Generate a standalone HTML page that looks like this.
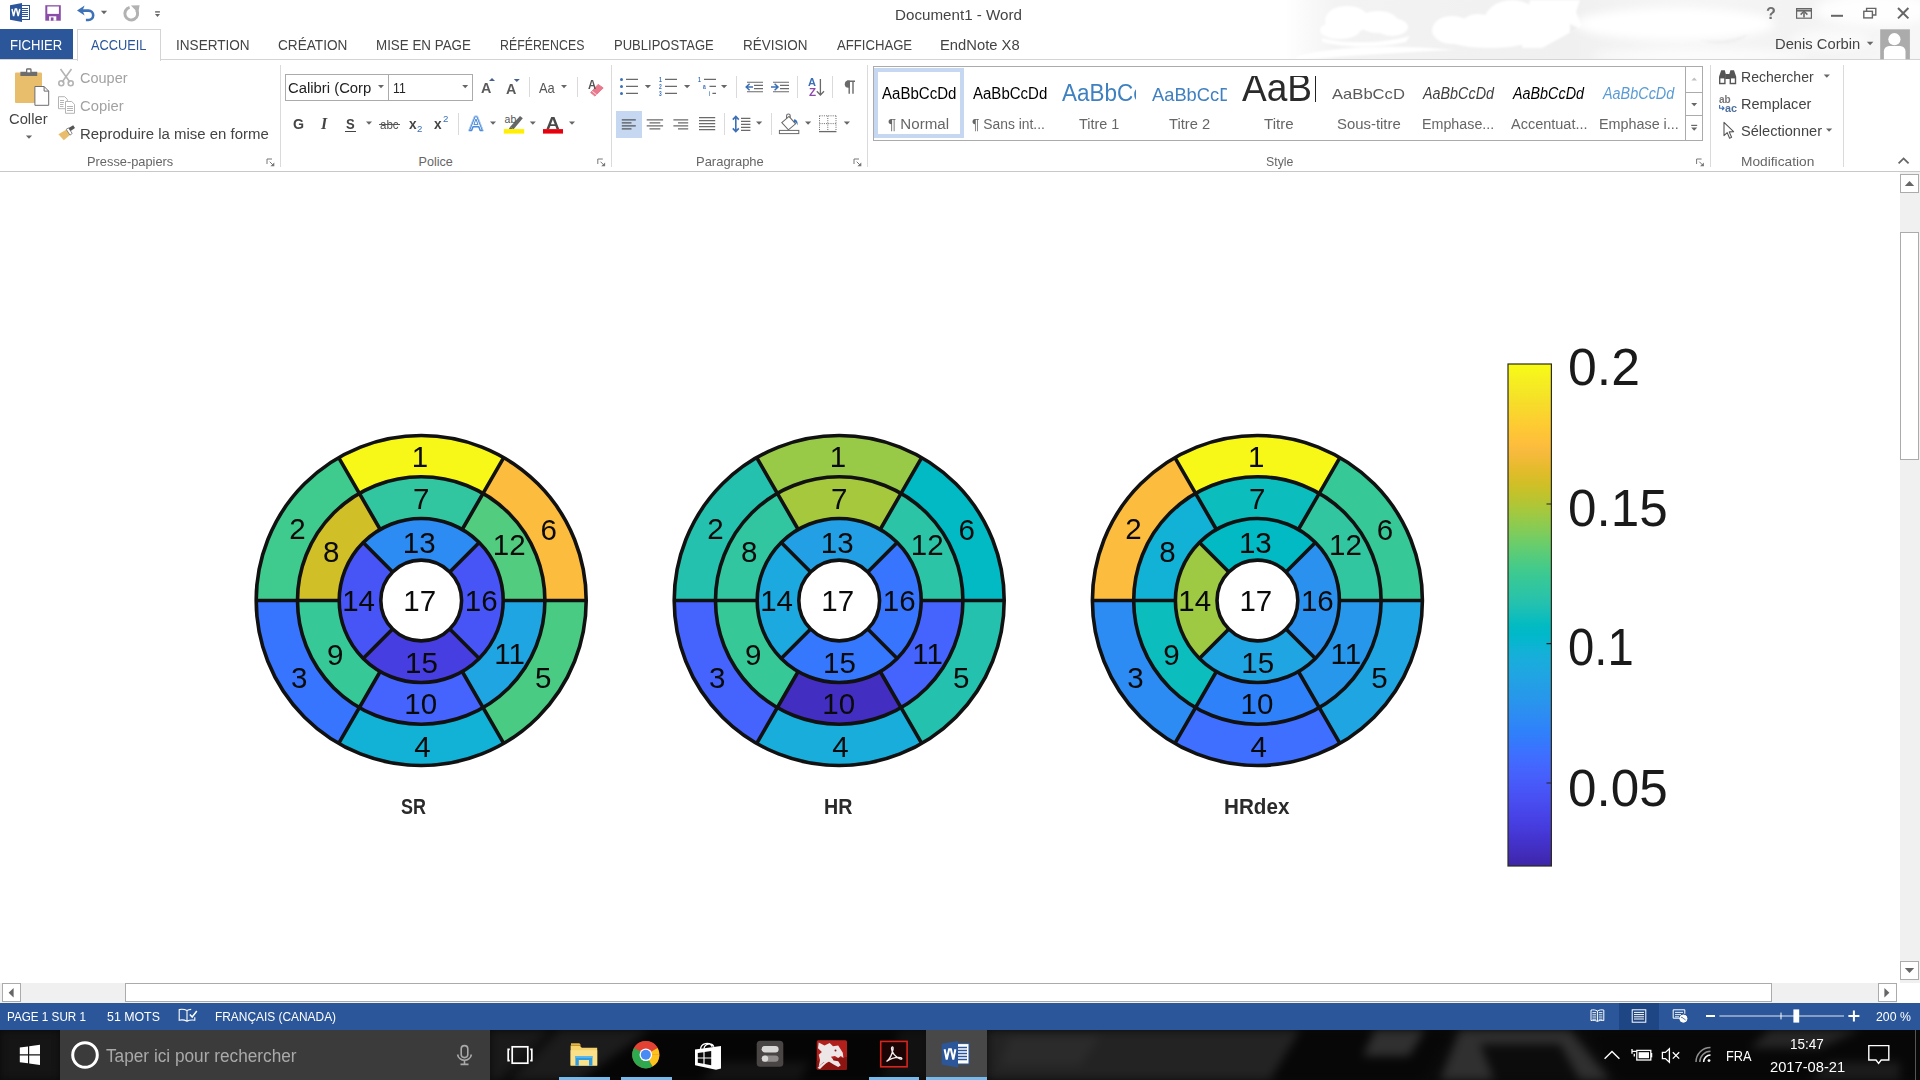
<!DOCTYPE html>
<html lang="fr"><head><meta charset="utf-8"><title>Document1 - Word</title>
<style>
html,body{margin:0;padding:0;}
body{width:1920px;height:1080px;overflow:hidden;background:#fff;position:relative;font-family:"Liberation Sans",sans-serif;}
.a{position:absolute;box-sizing:border-box;}
.t{position:absolute;white-space:nowrap;line-height:1.117;transform-origin:0 0;display:block;}
svg.ov{position:absolute;left:0;top:0;}
</style></head><body>
<svg class="ov" width="1920" height="1080" viewBox="0 0 1920 1080">
<defs><linearGradient id="cg" x1="0" y1="0" x2="1" y2="0"><stop offset="0" stop-color="#fff"/><stop offset=".08" stop-color="#f3f3f3"/><stop offset=".45" stop-color="#f0f0f0"/><stop offset=".62" stop-color="#f6f6f6"/><stop offset=".8" stop-color="#f3f3f3"/><stop offset="1" stop-color="#f7f7f7"/></linearGradient>
<filter id="cb" color-interpolation-filters="sRGB" x="-20%" y="-50%" width="140%" height="200%"><feGaussianBlur stdDeviation="1.2"/></filter>
<filter id="cb2" color-interpolation-filters="sRGB" x="-20%" y="-80%" width="140%" height="260%"><feGaussianBlur stdDeviation="5"/></filter>
<clipPath id="ccl"><rect x="1280" y="0" width="640" height="59"/></clipPath></defs>
<g clip-path="url(#ccl)"><rect x="1285" y="0" width="635" height="59" fill="url(#cg)"/>
<g filter="url(#cb)" fill="#fff">
<ellipse cx="1347" cy="20" rx="22" ry="14"/><ellipse cx="1378" cy="22" rx="20" ry="11"/><ellipse cx="1392" cy="27" rx="16" ry="9"/><ellipse cx="1340" cy="30" rx="20" ry="9"/>
<path d="M1322 38c20 6 60 6 88-2l-4 6c-26 6-60 6-84 0z"/>
<ellipse cx="1452" cy="30" rx="20" ry="14"/><ellipse cx="1478" cy="24" rx="16" ry="10"/><ellipse cx="1512" cy="22" rx="28" ry="22"/><ellipse cx="1490" cy="38" rx="44" ry="10"/>
<path d="M1530 0h50l-4 12l6 14l-40 22h-20z"/>

<path d="M1296 56c40-10 100-12 160-6c-50 2-110 6-160 10z"/>


</g>
<g filter="url(#cb2)" fill="#fff"><ellipse cx="1675" cy="24" rx="100" ry="16"/><ellipse cx="1700" cy="56" rx="110" ry="7" opacity=".7"/><ellipse cx="1875" cy="10" rx="60" ry="16" opacity=".85"/><ellipse cx="1830" cy="40" rx="40" ry="10" opacity=".6"/></g>
<g filter="url(#cb)" fill="#eeeeee"><path d="M1700 40c20 3 36 0 48-6c-8 10-30 12-48 6z"/><path d="M1570 24l8 4l-8 6z"/></g>
</g>
<rect x="0" y="1030" width="1920" height="50" fill="#0a0a0a"/><defs><filter id="tb" color-interpolation-filters="sRGB" x="-10%" y="-50%" width="120%" height="200%"><feGaussianBlur stdDeviation="5"/></filter>
<clipPath id="tbc"><rect x="0" y="1030" width="1920" height="50"/></clipPath></defs>
<g clip-path="url(#tbc)"><g filter="url(#tb)">
<rect x="0" y="1030" width="60" height="50" fill="#151515"/>
<path d="M490 1030h60l-50 50h-10z" fill="#1a1a1a"/>
<path d="M560 1030h90l-70 50h-70z" fill="#1c1c1c"/>
<path d="M650 1030h280v50h-350z" fill="#050505"/>
<path d="M720 1062h90l-10 18h-100z" fill="#141414"/>
<path d="M900 1030h30v50h-50z" fill="#111"/>
<rect x="987" y="1030" width="330" height="50" fill="#232323"/>
<path d="M1010 1036h90l-20 30h-80z" fill="#2b2b2b"/>
<path d="M1300 1030h150l-30 50h-150z" fill="#070707"/>
<path d="M1375 1030h50l-16 26h-46z" fill="#303030"/>
<path d="M1460 1030h110l40 50h-170z" fill="#303030"/>
<path d="M1480 1044h80l20 36h-86z" fill="#0c0c0c"/>
<path d="M1590 1030h330v50h-300z" fill="#070707"/>
<path d="M1770 1030h90l-40 18h-70z" fill="#262626"/>
<path d="M1830 1062h70v18h-90z" fill="#1c1c1c"/>
</g></g>
</svg>
<div class="a" style="left:0px;top:29px;width:73px;height:31px;background:#2b579a;"></div>
<div class="a" style="left:77px;top:29px;width:84px;height:32px;background:#fff;border:1px solid #d4d4d4;border-bottom:none;"></div>
<div class="a" style="left:0px;top:59px;width:78px;height:1px;background:#d4d4d4;"></div>
<div class="a" style="left:160px;top:59px;width:1760px;height:1px;background:#d4d4d4;"></div>
<div class="a" style="left:0px;top:171px;width:1920px;height:1px;background:#c8c8c8;"></div>
<div class="a" style="left:1900px;top:172px;width:20px;height:811px;background:#f0f0f0;"></div>
<div class="a" style="left:1900px;top:174px;width:19px;height:19px;background:#fff;border:1px solid #ababab;"></div>
<div class="a" style="left:1900px;top:232px;width:19px;height:228px;background:#fff;border:1px solid #ababab;"></div>
<div class="a" style="left:1900px;top:961px;width:19px;height:19px;background:#fff;border:1px solid #ababab;"></div>
<div class="a" style="left:280px;top:65px;width:1px;height:102px;background:#dadada;"></div>
<div class="a" style="left:285px;top:74px;width:104px;height:27px;background:#fff;border:1px solid #ababab;"></div>
<div class="a" style="left:388px;top:74px;width:85px;height:27px;background:#fff;border:1px solid #ababab;"></div>
<div class="a" style="left:529px;top:77px;width:1px;height:20px;background:#dadada;"></div>
<div class="a" style="left:577px;top:77px;width:1px;height:20px;background:#dadada;"></div>
<div class="a" style="left:344.5px;top:130.5px;width:11px;height:1.5px;background:#444;"></div>
<div class="a" style="left:379px;top:124px;width:20.5px;height:1.2px;background:#555;"></div>
<div class="a" style="left:458px;top:113px;width:1px;height:22px;background:#dadada;"></div>
<div class="a" style="left:611px;top:65px;width:1px;height:102px;background:#dadada;"></div>
<div class="a" style="left:736px;top:76px;width:1px;height:22px;background:#dadada;"></div>
<div class="a" style="left:797px;top:76px;width:1px;height:22px;background:#dadada;"></div>
<div class="a" style="left:832px;top:76px;width:1px;height:22px;background:#dadada;"></div>
<div class="a" style="left:867px;top:65px;width:1px;height:102px;background:#dadada;"></div>
<div class="a" style="left:616px;top:111px;width:26px;height:27px;background:#c5d7f1;"></div>
<div class="a" style="left:724px;top:113px;width:1px;height:22px;background:#dadada;"></div>
<div class="a" style="left:771px;top:113px;width:1px;height:22px;background:#dadada;"></div>
<div class="a" style="left:873px;top:66px;width:830px;height:75px;background:#fff;border:1px solid #ababab;"></div>
<div class="a" style="left:874px;top:68px;width:90px;height:70px;background:#fff;border:4.5px solid #c5d7f1;"></div>
<div class="a" style="left:1315px;top:76px;width:1.2px;height:26px;background:#222;"></div>
<div class="a" style="left:1685px;top:66px;width:18px;height:27px;background:#fff;border:1px solid #ababab;"></div>
<div class="a" style="left:1685px;top:92px;width:18px;height:24px;background:#fff;border:1px solid #ababab;"></div>
<div class="a" style="left:1685px;top:115px;width:18px;height:26px;background:#fff;border:1px solid #ababab;"></div>
<div class="a" style="left:1710px;top:65px;width:1px;height:102px;background:#dadada;"></div>
<div class="a" style="left:1843px;top:65px;width:1px;height:102px;background:#dadada;"></div>
<div class="a" style="left:0px;top:983px;width:1897px;height:20px;background:#f0f0f0;"></div>
<div class="a" style="left:1897px;top:983px;width:23px;height:20px;background:#fff;"></div>
<div class="a" style="left:2px;top:983px;width:19px;height:19px;background:#fff;border:1px solid #ababab;"></div>
<div class="a" style="left:125px;top:983px;width:1647px;height:19px;background:#fff;border:1px solid #ababab;"></div>
<div class="a" style="left:1878px;top:983px;width:19px;height:19px;background:#fff;border:1px solid #ababab;"></div>
<div class="a" style="left:0px;top:1003px;width:1920px;height:27px;background:#2b579a;"></div>
<div class="a" style="left:1619px;top:1003px;width:40px;height:27px;background:#1e4684;"></div>
<div class="a" style="left:60px;top:1030px;width:430px;height:50px;background:#3b3b3b;"></div>
<div class="a" style="left:559.3px;top:1077.4px;width:50.30000000000007px;height:2.6px;background:#76b9ed;"></div>
<div class="a" style="left:621px;top:1077.4px;width:50.700000000000045px;height:2.6px;background:#76b9ed;"></div>
<div class="a" style="left:869.3px;top:1077.4px;width:50.10000000000002px;height:2.6px;background:#76b9ed;"></div>
<div class="a" style="left:926px;top:1030px;width:60.6px;height:50px;background:#484848;"></div>
<div class="a" style="left:926px;top:1077.4px;width:60.6px;height:2.6px;background:#76b9ed;"></div>
<div class="a" style="left:1915px;top:1030px;width:1px;height:50px;background:#555;"></div>
<svg class="ov" width="1920" height="1080" viewBox="0 0 1920 1080">
<g>
<rect x="19" y="5.5" width="10.5" height="14" fill="#fff" stroke="#2b579a" stroke-width="1"/>
<g stroke="#2b579a" stroke-width="1"><path d="M21 8.5h7M21 10.5h7M21 12.5h7M21 14.5h7M21 16.5h7"/></g>
<path d="M10 5.2 L22 3 V22 L10 19.8 Z" fill="#2b579a"/>
<path d="M12 9 l1.6 7.2 l1.7-7.2 h1.2 l1.7 7.2 l1.6-7.2" fill="none" stroke="#fff" stroke-width="1.5" stroke-linejoin="miter"/>
</g>
<g><rect x="45.3" y="5.2" width="15.5" height="15.5" fill="#8a4ea8"/><rect x="47.3" y="6.5" width="11.6" height="7.4" fill="#fff"/><rect x="49.1" y="16.3" width="7.2" height="4.4" fill="#fff"/><rect x="50.8" y="17.4" width="2.7" height="3.3" fill="#8a4ea8"/></g>
<g fill="none" stroke="#3e72b8" stroke-width="2.6"><path d="M79.5 10.6 h9 a4.7 4.7 0 0 1 0 9.4 h-2.6"/></g><path d="M84.6 5.6 L77 10.6 L84.6 15.6 L82.6 10.6z" fill="#3e72b8"/>
<path d="M100.9 10.8h6.2l-3.1 3.4z" fill="#666"/>
<g fill="none" stroke="#b2b2b2" stroke-width="3"><path d="M129.6 7.4 A6.4 6.4 0 1 0 136.4 9.8"/></g><path d="M130.9 5.4 L139.6 5.2 L138.2 13 Z" fill="#b2b2b2"/>
<path d="M155.1 11.9h4.8" stroke="#666" stroke-width="1.4"/><path d="M155 13.9h5l-2.5 3z" fill="#666"/>
<g fill="none" stroke="#666" stroke-width="1.2"><rect x="1796.6" y="8.6" width="14.8" height="9.6"/><path d="M1796.6 10.6h14.8" stroke-width="2"/><path d="M1804 17.6v-5" stroke-width="1.6"/><path d="M1800.6 14.6l3.4-3.4l3.4 3.4" stroke-width="1.5"/></g>
<path d="M1831 15.8h12" stroke="#666" stroke-width="2"/>
<g fill="none" stroke="#666" stroke-width="1.4"><rect x="1863.8" y="11.3" width="8.6" height="6.6"/><path d="M1866.6 11v-2.6h9.2v6.6h-3" /></g>
<path d="M1898 8l10.4 10.4M1908.4 8L1898 18.4" stroke="#666" stroke-width="2"/>
<path d="M1866.8 41.8h6.6l-3.3 3.4z" fill="#666"/>
<g><rect x="1880.2" y="29.3" width="29.7" height="30" fill="#ababab"/><circle cx="1894.4" cy="39.2" r="6.1" fill="#fff"/><path d="M1883.9 59.3 v-8 a5.300 5.300 0 0 1 5.300-5.300 h11 a5.300 5.300 0 0 1 5.300 5.300 v8z" fill="#fff"/></g>
<path d="M1904.8 186h9.4l-4.7-5z" fill="#666"/>
<path d="M1904.8 968h9.4l-4.7 5z" fill="#666"/>
<g><rect x="15" y="72.4" width="27" height="30.6" rx="1" fill="#e8bd6c"/>
<path d="M20.4 76v-4.2h5.6v-2.2a1.4 1.4 0 0 1 1.4-1.4h2.8a1.4 1.4 0 0 1 1.4 1.4v2.2h5.6v4.2z" fill="#6d6d6d"/><rect x="27.3" y="69.7" width="3" height="2.6" fill="#fff"/>
<path d="M34.9 86.5h9.2l4.6 4.6v14.2h-13.8z" fill="#fff" stroke="#6d6d6d" stroke-width="1"/><path d="M44.1 86.5v4.6h4.6" fill="none" stroke="#6d6d6d" stroke-width="1"/></g>
<path d="M25.9 135.6h6.2l-3.1 3.2z" fill="#666"/>
<g fill="none" stroke="#b4b4b4" stroke-width="1.6"><path d="M60.5 69l9.5 13.2M71.5 69l-9.5 13.2"/><circle cx="61.3" cy="83.2" r="2.5"/><circle cx="70.7" cy="83.2" r="2.5"/></g>
<g fill="#fff" stroke="#b4b4b4" stroke-width="1"><path d="M58.5 96.7h6.2l2.6 2.6v9.4h-8.8z"/><path d="M65.5 101.5h6.2l2.8 2.8v9h-9z"/></g>
<g stroke="#b4b4b4" stroke-width="1"><path d="M60 100.5h4M60 102.5h4M60 104.5h3.5M60 106.5h3.5M67 106.5h6M67 108.5h6M67 110.5h6"/></g>
<g><path d="M58.4 134.2l8.2-4.6l3.4 5.4l-6.2 5.2z" fill="#e8bd6c"/><path d="M66.2 129.3l2.4-1.4l3.6 5.6l-2.2 1.6z" fill="#fff" stroke="#6d6d6d" stroke-width=".8"/><path d="M68.6 127.9l4.6-2.6l1.8 2.8l-4.4 3z" fill="#555"/></g>
<g fill="none" stroke="#777" stroke-width="1"><path d="M267 164v-5h5"/><path d="M269.7 161.7l4 4"/></g><path d="M274.3 162.4v3.9h-3.9z" fill="#777"/>
<path d="M378 85h6l-3.0 3.2z" fill="#666"/>
<path d="M462.2 85h6l-3.0 3.2z" fill="#666"/>
<path d="M489 80.9h6l-3-3z" fill="#46618e"/>
<path d="M513.8 78.900h6l-3 3.100z" fill="#46618e"/>
<path d="M561 85h6l-3.0 3.2z" fill="#666"/>
<path d="M598.1 84.400l5.100 3.500l-8.200 8.200l-4.300-3.500z" fill="#e8788c" stroke="#e8788c" stroke-width="1" stroke-linejoin="round"/><path d="M592.3 91.300l4.400 3.600" stroke="#fff" stroke-width=".8"/>
<path d="M366 121.5h6l-3.0 3.2z" fill="#666"/>
<g fill="#fff" stroke="#4a8ad8" stroke-width="1.5" stroke-linejoin="round"><path d="M469.2 130.6l5.6-14h2.3l5.6 14h-2.5l-1.4-3.8h-5.8l-1.4 3.8z"/></g><path d="M473.9 124.6h4.1l-2.05-5.6z" fill="#fff" stroke="#4a8ad8" stroke-width="1"/>
<path d="M468.4 131.2l6-15.2h3.1l6 15.2" fill="none" stroke="#bcd6f4" stroke-width=".9" opacity=".9"/>
<path d="M490 121.5h6l-3.0 3.2z" fill="#666"/>
<path d="M510.2 126.8l9.8-10.8l2.8 2.2l-9.2 11z" fill="#666"/><path d="M508.6 129.4l1.6-2.6l3.4 2.4z" fill="#666"/><rect x="503.8" y="129.1" width="20.4" height="4.5" fill="#ffef00"/>
<path d="M529.8 121.5h6l-3.0 3.2z" fill="#666"/>
<rect x="543" y="129.1" width="20" height="4.5" fill="#e8000c"/>
<path d="M569 121.5h6l-3.0 3.2z" fill="#666"/>
<g fill="none" stroke="#777" stroke-width="1"><path d="M597.8 164v-5h5"/><path d="M600.5 161.7l4 4"/></g><path d="M605.0999999999999 162.4v3.9h-3.9z" fill="#777"/>
<circle cx="621.5" cy="79.4" r="1.5" fill="#3b6fb6"/><circle cx="621.5" cy="86.4" r="1.5" fill="#3b6fb6"/><circle cx="621.5" cy="93.4" r="1.5" fill="#3b6fb6"/>
<path d="M626 79.4H638M626 86.4H638M626 93.4H638" stroke="#6a6a6a" stroke-width="1.1" fill="none"/>
<path d="M644.8 85h6.2l-3.1 3.2z" fill="#666"/>
<path d="M665 79.4H677M665 86.4H677M665 93.4H677" stroke="#6a6a6a" stroke-width="1.1" fill="none"/>
<path d="M684 85h6.2l-3.1 3.2z" fill="#666"/>
<path d="M704 79.4H716M709.5 86.4H716M712.4 93.4H716" stroke="#6a6a6a" stroke-width="1.1" fill="none"/>
<path d="M721 85h6.2l-3.1 3.2z" fill="#666"/>
<path d="M747 82.2H763M754 85.4H763M754 88.6H763M747 91.8H763" stroke="#6a6a6a" stroke-width="1.1" fill="none"/>
<path d="M753 87H746.4M749.6 83.8L746.2 87l3.4 3.2" stroke="#3b6fb6" stroke-width="1.5" fill="none"/>
<path d="M773 82.2H789M780 85.4H789M780 88.6H789M773 91.8H789" stroke="#6a6a6a" stroke-width="1.1" fill="none"/>
<path d="M771 87h6.8M774.6 83.8L778 87l-3.4 3.2" stroke="#3b6fb6" stroke-width="1.5" fill="none"/>
<path d="M820.4 79v15.6M816.8 91.2l3.6 3.8l3.6-3.8" stroke="#6a6a6a" stroke-width="1.3" fill="none"/>
<path d="M849.2 93.8V81.2M853 93.8V81.2M847 81.2h8" stroke="#6a6a6a" stroke-width="1.4" fill="none"/><path d="M849.8 80.6h-1.4a3.6 3.6 0 0 0 0 7.2h1.4z" fill="#6a6a6a"/>
<path d="M621.8 119.8H635.8M621.8 122.8H631.5M621.8 125.8H635.8M621.8 128.8H631.5" stroke="#555" stroke-width="1.2" fill="none"/>
<path d="M646.7 119.8H663.1M649.5 122.8H660.3M646.7 125.8H663.1M649.5 128.8H660.3" stroke="#6a6a6a" stroke-width="1.2" fill="none"/>
<path d="M673.4 119.8H688.2M678 122.8H688.2M673.4 125.8H688.2M678 128.8H688.2" stroke="#6a6a6a" stroke-width="1.2" fill="none"/>
<path d="M699 117.6H715.2M699 120.6H715.2M699 123.6H715.2M699 126.6H715.2M699 129.6H715.2" stroke="#6a6a6a" stroke-width="1.2" fill="none"/>
<path d="M735.8 116.6v14.6M732.8 119.6l3-3.2l3 3.2M732.8 128.4l3 3.2l3-3.2" stroke="#3b6fb6" stroke-width="1.6" fill="none"/>
<path d="M741 118.4H750.4M741 121.4H750.4M741 124.4H750.4M741 127.4H750.4M741 130.4H750.4" stroke="#6a6a6a" stroke-width="1.2" fill="none"/>
<path d="M756 121.5h6.2l-3.1 3.2z" fill="#666"/>
<g fill="none" stroke="#6a6a6a" stroke-width="1.1"><path d="M781.8 122.6l7.2-6.2l6.6 7.4l-7.2 6z" fill="#fff"/><path d="M786.6 118.8v-3a1.8 1.8 0 0 1 3.6 0v2"/></g><path d="M794.2 119.2c2.6.2 3.8 2.2 3.4 6.2c-.8-2.6-2-3.4-4.2-3.4z" fill="#3b6fb6"/><rect x="779.4" y="130.4" width="19.4" height="3.2" fill="#fff" stroke="#6a6a6a" stroke-width="1"/>
<path d="M805 121.5h6.2l-3.1 3.2z" fill="#666"/>
<g fill="none" stroke="#6a6a6a" stroke-width="1" stroke-dasharray="1 1.2"><path d="M819.5 115.8h16.5M819.5 115.8v15.6M836 115.8v15.6M827.8 115.8v15.6M819.5 123.6h16.5"/></g><path d="M819 131.6h17.4" stroke="#6a6a6a" stroke-width="1.3"/>
<path d="M843.8 121.5h6.2l-3.1 3.2z" fill="#666"/>
<g fill="none" stroke="#777" stroke-width="1"><path d="M854 164v-5h5"/><path d="M856.7 161.7l4 4"/></g><path d="M861.3 162.4v3.9h-3.9z" fill="#777"/>
<path d="M1691.4 80.4h5.6l-2.8-3z" fill="#c0c0c0"/><path d="M1691.2 103h6l-3 3.2z" fill="#666"/><path d="M1691.2 125.4h6" stroke="#666" stroke-width="1.2"/><path d="M1691.2 127.6h6l-3 3.2z" fill="#666"/>
<g fill="none" stroke="#777" stroke-width="1"><path d="M1696.6 164v-5h5"/><path d="M1699.3 161.7l4 4"/></g><path d="M1703.8999999999999 162.4v3.9h-3.9z" fill="#777"/>
<g fill="#555"><path d="M1719 84.2v-7.4l2.2-6.6h3.6l.8 3v11z"/><path d="M1736.2 84.2v-7.4l-2.2-6.6h-3.6l-.8 3v11z"/><rect x="1725.2" y="74" width="4.8" height="5"/></g><g fill="#fff"><rect x="1720.4" y="78.4" width="3.8" height="4.4"/><rect x="1731" y="78.4" width="3.8" height="4.4"/></g>
<path d="M1823.7 74.6h6.2l-3.1 3.2z" fill="#666"/>
<path d="M1719.6 105v3.2h4.2M1722.2 106.4l1.8 1.8l-1.8 1.8" stroke="#3b6fb6" stroke-width="1.1" fill="none"/>
<path d="M1724 122.4v13.2l3.2-3l2.4 5.6l2-.9l-2.4-5.4l4.4-.2z" fill="#fff" stroke="#555" stroke-width="1.1" stroke-linejoin="round"/>
<path d="M1826 128.6h6.2l-3.1 3.2z" fill="#666"/>
<path d="M1898.6 163.4l5-5l5 5" stroke="#666" stroke-width="1.8" fill="none"/>
<defs><filter id="pb" color-interpolation-filters="sRGB" x="-5%" y="-5%" width="110%" height="110%"><feGaussianBlur stdDeviation="0.7"/></filter></defs>
<g filter="url(#pb)"><path d="M503.70 457.61A165.0 165.0 0 0 0 338.70 457.61L359.35 493.37A123.7 123.7 0 0 1 483.05 493.37Z" fill="#f8f818"/><path d="M483.05 493.37A123.7 123.7 0 0 0 359.35 493.37L380.20 529.49A82.0 82.0 0 0 1 462.20 529.49Z" fill="#31c69f"/><path d="M338.70 457.61A165.0 165.0 0 0 0 256.20 600.50L297.50 600.50A123.7 123.7 0 0 1 359.35 493.37Z" fill="#3fca8e"/><path d="M359.35 493.37A123.7 123.7 0 0 0 297.50 600.50L339.20 600.50A82.0 82.0 0 0 1 380.20 529.49Z" fill="#d1bf27"/><path d="M256.20 600.50A165.0 165.0 0 0 0 338.70 743.39L359.35 707.63A123.7 123.7 0 0 1 297.50 600.50Z" fill="#3875fe"/><path d="M297.50 600.50A123.7 123.7 0 0 0 359.35 707.63L380.20 671.51A82.0 82.0 0 0 1 339.20 600.50Z" fill="#37c897"/><path d="M338.70 743.39A165.0 165.0 0 0 0 503.70 743.39L483.05 707.63A123.7 123.7 0 0 1 359.35 707.63Z" fill="#12b1d6"/><path d="M359.35 707.63A123.7 123.7 0 0 0 483.05 707.63L462.20 671.51A82.0 82.0 0 0 1 380.20 671.51Z" fill="#4563fd"/><path d="M503.70 743.39A165.0 165.0 0 0 0 586.20 600.50L544.90 600.50A123.7 123.7 0 0 1 483.05 707.63Z" fill="#4acb84"/><path d="M483.05 707.63A123.7 123.7 0 0 0 544.90 600.50L503.20 600.50A82.0 82.0 0 0 1 462.20 671.51Z" fill="#20a5e3"/><path d="M586.20 600.50A165.0 165.0 0 0 0 503.70 457.61L483.05 493.37A123.7 123.7 0 0 1 544.90 600.50Z" fill="#fcbc3d"/><path d="M544.90 600.50A123.7 123.7 0 0 0 483.05 493.37L462.20 529.49A82.0 82.0 0 0 1 503.20 600.50Z" fill="#52cc7e"/><path d="M479.18 542.52A82.0 82.0 0 0 0 363.22 542.52L392.63 571.93A40.4 40.4 0 0 1 449.77 571.93Z" fill="#2d8cf3"/><path d="M363.22 542.52A82.0 82.0 0 0 0 363.22 658.48L392.63 629.07A40.4 40.4 0 0 1 392.63 571.93Z" fill="#4755f6"/><path d="M363.22 658.48A82.0 82.0 0 0 0 479.18 658.48L449.77 629.07A40.4 40.4 0 0 1 392.63 629.07Z" fill="#473ee2"/><path d="M479.18 658.48A82.0 82.0 0 0 0 479.18 542.52L449.77 571.93A40.4 40.4 0 0 1 449.77 629.07Z" fill="#4755f6"/><circle cx="421.2" cy="600.5" r="40.4" fill="#fff"/><g fill="none" stroke="#111" stroke-width="3.6"><circle cx="421.2" cy="600.5" r="165.0"/><circle cx="421.2" cy="600.5" r="123.7"/><circle cx="421.2" cy="600.5" r="82.0"/><circle cx="421.2" cy="600.5" r="40.4"/><path d="M503.20 600.50L586.20 600.50M462.20 529.49L503.70 457.61M380.20 529.49L338.70 457.61M339.20 600.50L256.20 600.50M380.20 671.51L338.70 743.39M462.20 671.51L503.70 743.39M449.77 571.93L479.18 542.52M392.63 571.93L363.22 542.52M392.63 629.07L363.22 658.48M449.77 629.07L479.18 658.48"/></g></g>
<g filter="url(#pb)"><path d="M921.70 457.61A165.0 165.0 0 0 0 756.70 457.61L777.35 493.37A123.7 123.7 0 0 1 901.05 493.37Z" fill="#98ca47"/><path d="M901.05 493.37A123.7 123.7 0 0 0 777.35 493.37L798.20 529.49A82.0 82.0 0 0 1 880.20 529.49Z" fill="#a6c83d"/><path d="M756.70 457.61A165.0 165.0 0 0 0 674.20 600.50L715.50 600.50A123.7 123.7 0 0 1 777.35 493.37Z" fill="#24c1ae"/><path d="M777.35 493.37A123.7 123.7 0 0 0 715.50 600.50L757.20 600.50A82.0 82.0 0 0 1 798.20 529.49Z" fill="#31c69f"/><path d="M674.20 600.50A165.0 165.0 0 0 0 756.70 743.39L777.35 707.63A123.7 123.7 0 0 1 715.50 600.50Z" fill="#4563fd"/><path d="M715.50 600.50A123.7 123.7 0 0 0 777.35 707.63L798.20 671.51A82.0 82.0 0 0 1 757.20 600.50Z" fill="#37c897"/><path d="M756.70 743.39A165.0 165.0 0 0 0 921.70 743.39L901.05 707.63A123.7 123.7 0 0 1 777.35 707.63Z" fill="#18addb"/><path d="M777.35 707.63A123.7 123.7 0 0 0 901.05 707.63L880.20 671.51A82.0 82.0 0 0 1 798.20 671.51Z" fill="#422ec0"/><path d="M921.70 743.39A165.0 165.0 0 0 0 1004.20 600.50L962.90 600.50A123.7 123.7 0 0 1 901.05 707.63Z" fill="#24c1ae"/><path d="M901.05 707.63A123.7 123.7 0 0 0 962.90 600.50L921.20 600.50A82.0 82.0 0 0 1 880.20 671.51Z" fill="#4563fd"/><path d="M1004.20 600.50A165.0 165.0 0 0 0 921.70 457.61L901.05 493.37A123.7 123.7 0 0 1 962.90 600.50Z" fill="#02bac3"/><path d="M962.90 600.50A123.7 123.7 0 0 0 901.05 493.37L880.20 529.49A82.0 82.0 0 0 1 921.20 600.50Z" fill="#2cc4a7"/><path d="M897.18 542.52A82.0 82.0 0 0 0 781.22 542.52L810.63 571.93A40.4 40.4 0 0 1 867.77 571.93Z" fill="#23a0e5"/><path d="M781.22 542.52A82.0 82.0 0 0 0 781.22 658.48L810.63 629.07A40.4 40.4 0 0 1 810.63 571.93Z" fill="#1ca9df"/><path d="M781.22 658.48A82.0 82.0 0 0 0 897.18 658.48L867.77 629.07A40.4 40.4 0 0 1 810.63 629.07Z" fill="#3578fd"/><path d="M897.18 658.48A82.0 82.0 0 0 0 897.18 542.52L867.77 571.93A40.4 40.4 0 0 1 867.77 629.07Z" fill="#3875fe"/><circle cx="839.2" cy="600.5" r="40.4" fill="#fff"/><g fill="none" stroke="#111" stroke-width="3.6"><circle cx="839.2" cy="600.5" r="165.0"/><circle cx="839.2" cy="600.5" r="123.7"/><circle cx="839.2" cy="600.5" r="82.0"/><circle cx="839.2" cy="600.5" r="40.4"/><path d="M921.20 600.50L1004.20 600.50M880.20 529.49L921.70 457.61M798.20 529.49L756.70 457.61M757.20 600.50L674.20 600.50M798.20 671.51L756.70 743.39M880.20 671.51L921.70 743.39M867.77 571.93L897.18 542.52M810.63 571.93L781.22 542.52M810.63 629.07L781.22 658.48M867.77 629.07L897.18 658.48"/></g></g>
<g filter="url(#pb)"><path d="M1339.90 457.61A165.0 165.0 0 0 0 1174.90 457.61L1195.55 493.37A123.7 123.7 0 0 1 1319.25 493.37Z" fill="#f8f818"/><path d="M1319.25 493.37A123.7 123.7 0 0 0 1195.55 493.37L1216.40 529.49A82.0 82.0 0 0 1 1298.40 529.49Z" fill="#0bbdbd"/><path d="M1174.90 457.61A165.0 165.0 0 0 0 1092.40 600.50L1133.70 600.50A123.7 123.7 0 0 1 1195.55 493.37Z" fill="#fcbc3d"/><path d="M1195.55 493.37A123.7 123.7 0 0 0 1133.70 600.50L1175.40 600.50A82.0 82.0 0 0 1 1216.40 529.49Z" fill="#12b1d6"/><path d="M1092.40 600.50A165.0 165.0 0 0 0 1174.90 743.39L1195.55 707.63A123.7 123.7 0 0 1 1133.70 600.50Z" fill="#2d8cf3"/><path d="M1133.70 600.50A123.7 123.7 0 0 0 1195.55 707.63L1216.40 671.51A82.0 82.0 0 0 1 1175.40 600.50Z" fill="#0bbdbd"/><path d="M1174.90 743.39A165.0 165.0 0 0 0 1339.90 743.39L1319.25 707.63A123.7 123.7 0 0 1 1195.55 707.63Z" fill="#3e6fff"/><path d="M1195.55 707.63A123.7 123.7 0 0 0 1319.25 707.63L1298.40 671.51A82.0 82.0 0 0 1 1216.40 671.51Z" fill="#2f81fa"/><path d="M1339.90 743.39A165.0 165.0 0 0 0 1422.40 600.50L1381.10 600.50A123.7 123.7 0 0 1 1319.25 707.63Z" fill="#20a5e3"/><path d="M1319.25 707.63A123.7 123.7 0 0 0 1381.10 600.50L1339.40 600.50A82.0 82.0 0 0 1 1298.40 671.51Z" fill="#2797eb"/><path d="M1422.40 600.50A165.0 165.0 0 0 0 1339.90 457.61L1319.25 493.37A123.7 123.7 0 0 1 1381.10 600.50Z" fill="#37c897"/><path d="M1381.10 600.50A123.7 123.7 0 0 0 1319.25 493.37L1298.40 529.49A82.0 82.0 0 0 1 1339.40 600.50Z" fill="#31c69f"/><path d="M1315.38 542.52A82.0 82.0 0 0 0 1199.42 542.52L1228.83 571.93A40.4 40.4 0 0 1 1285.97 571.93Z" fill="#02bac3"/><path d="M1199.42 542.52A82.0 82.0 0 0 0 1199.42 658.48L1228.83 629.07A40.4 40.4 0 0 1 1228.83 571.93Z" fill="#9dc943"/><path d="M1199.42 658.48A82.0 82.0 0 0 0 1315.38 658.48L1285.97 629.07A40.4 40.4 0 0 1 1228.83 629.07Z" fill="#20a5e3"/><path d="M1315.38 658.48A82.0 82.0 0 0 0 1315.38 542.52L1285.97 571.93A40.4 40.4 0 0 1 1285.97 629.07Z" fill="#2b91ef"/><circle cx="1257.4" cy="600.5" r="40.4" fill="#fff"/><g fill="none" stroke="#111" stroke-width="3.6"><circle cx="1257.4" cy="600.5" r="165.0"/><circle cx="1257.4" cy="600.5" r="123.7"/><circle cx="1257.4" cy="600.5" r="82.0"/><circle cx="1257.4" cy="600.5" r="40.4"/><path d="M1339.40 600.50L1422.40 600.50M1298.40 529.49L1339.90 457.61M1216.40 529.49L1174.90 457.61M1175.40 600.50L1092.40 600.50M1216.40 671.51L1174.90 743.39M1298.40 671.51L1339.90 743.39M1285.97 571.93L1315.38 542.52M1228.83 571.93L1199.42 542.52M1228.83 629.07L1199.42 658.48M1285.97 629.07L1315.38 658.48"/></g></g>
<defs><linearGradient id="par" x1="0" y1="0" x2="0" y2="1"><stop offset="0.0000" stop-color="#f9fb15"/><stop offset="0.0159" stop-color="#f7f51b"/><stop offset="0.0317" stop-color="#f6ef20"/><stop offset="0.0476" stop-color="#f5e924"/><stop offset="0.0635" stop-color="#f5e327"/><stop offset="0.0794" stop-color="#f7dc2a"/><stop offset="0.0952" stop-color="#fad62d"/><stop offset="0.1111" stop-color="#fccf30"/><stop offset="0.1270" stop-color="#fec934"/><stop offset="0.1429" stop-color="#fec338"/><stop offset="0.1587" stop-color="#febe3c"/><stop offset="0.1746" stop-color="#f8ba3d"/><stop offset="0.1905" stop-color="#f0ba36"/><stop offset="0.2063" stop-color="#e6bb2d"/><stop offset="0.2222" stop-color="#dcbd29"/><stop offset="0.2381" stop-color="#d1bf27"/><stop offset="0.2540" stop-color="#c5c22a"/><stop offset="0.2698" stop-color="#b9c431"/><stop offset="0.2857" stop-color="#abc739"/><stop offset="0.3016" stop-color="#9dc943"/><stop offset="0.3175" stop-color="#8fcb4e"/><stop offset="0.3333" stop-color="#81cc59"/><stop offset="0.3492" stop-color="#72cd64"/><stop offset="0.3651" stop-color="#64cd6f"/><stop offset="0.3810" stop-color="#57cc7a"/><stop offset="0.3968" stop-color="#4acb84"/><stop offset="0.4127" stop-color="#3fca8e"/><stop offset="0.4286" stop-color="#37c897"/><stop offset="0.4444" stop-color="#31c69f"/><stop offset="0.4603" stop-color="#2cc4a7"/><stop offset="0.4762" stop-color="#24c1ae"/><stop offset="0.4921" stop-color="#19bfb6"/><stop offset="0.5079" stop-color="#0bbdbd"/><stop offset="0.5238" stop-color="#02bac3"/><stop offset="0.5397" stop-color="#01b8ca"/><stop offset="0.5556" stop-color="#08b5d0"/><stop offset="0.5714" stop-color="#12b1d6"/><stop offset="0.5873" stop-color="#18addb"/><stop offset="0.6032" stop-color="#1ca9df"/><stop offset="0.6190" stop-color="#20a5e3"/><stop offset="0.6349" stop-color="#23a0e5"/><stop offset="0.6508" stop-color="#259be8"/><stop offset="0.6667" stop-color="#2797eb"/><stop offset="0.6825" stop-color="#2b91ef"/><stop offset="0.6984" stop-color="#2d8cf3"/><stop offset="0.7143" stop-color="#2e87f7"/><stop offset="0.7302" stop-color="#2f81fa"/><stop offset="0.7460" stop-color="#327cfc"/><stop offset="0.7619" stop-color="#3875fe"/><stop offset="0.7778" stop-color="#3e6fff"/><stop offset="0.7937" stop-color="#4269fe"/><stop offset="0.8095" stop-color="#4563fd"/><stop offset="0.8254" stop-color="#465efb"/><stop offset="0.8413" stop-color="#4758f8"/><stop offset="0.8571" stop-color="#4852f4"/><stop offset="0.8730" stop-color="#484df0"/><stop offset="0.8889" stop-color="#4747eb"/><stop offset="0.9048" stop-color="#4741e5"/><stop offset="0.9206" stop-color="#463cde"/><stop offset="0.9365" stop-color="#4537d5"/><stop offset="0.9524" stop-color="#4332cb"/><stop offset="0.9683" stop-color="#422ec0"/><stop offset="0.9841" stop-color="#402ab4"/><stop offset="1.0000" stop-color="#3e26a8"/></linearGradient></defs>
<g filter="url(#pb)"><rect x="1508" y="364" width="43.4" height="502" fill="url(#par)" stroke="#2c2c18" stroke-width="1.2"/><path d="M1546.5 504h5M1546.5 643.7h5M1546.5 783h5" stroke="#222" stroke-width="1.2"/></g>
<path d="M13.6 988v9.4l-5-4.7z" fill="#666"/>
<path d="M1884.4 988v9.4l5-4.7z" fill="#666"/>
<g fill="none" stroke="#fff" stroke-width="1.1"><path d="M187 1010.6v10.6M187 1010.6c-2.6-1.4-5.4-1.6-7.8-1v10.6c2.4-.6 5.2-.4 7.8 1M187 1010.6c1.4-.8 2.8-1.1 4.2-1.2M187 1021.2c1.6-.9 4-1.4 7.8-1v-3"/><path d="M189.8 1014.4l2.4 2.6l4.6-6" stroke-width="1.5"/></g>
<g fill="none" stroke="#fff" stroke-width="1"><path d="M1597.4 1011v10.4M1597.4 1011c-2-1.2-4.2-1.4-6.4-.9v10.5c2.2-.5 4.4-.3 6.4.8M1597.4 1011c2-1.2 4.2-1.4 6.4-.9v10.5c-2.2-.5-4.4-.3-6.4.8"/><path d="M1592.4 1012.6h3.6M1592.4 1014.8h3.6M1592.4 1017h3.6M1592.4 1019.2h3.6M1598.8 1012.6h3.6M1598.8 1014.8h3.6M1598.8 1017h3.6M1598.8 1019.2h3.6" stroke-width=".9"/></g>
<g fill="none" stroke="#fff" stroke-width="1"><rect x="1632.2" y="1009.8" width="13.6" height="12.4"/><path d="M1634 1012.4h10M1634 1014.6h10M1634 1016.8h10M1634 1019h10" stroke-width="1"/></g>
<g fill="none" stroke="#fff" stroke-width="1"><path d="M1680 1018.2h-6.8v-8.4h11.6v4"/><path d="M1675 1012.4h8M1675 1014.6h6M1675 1016.8h4" stroke-width=".9"/><circle cx="1683.4" cy="1018.6" r="3.6" fill="#fff"/><path d="M1681 1017c1 1 2 .4 2.4 1.400s1.200.4 2.200 1.600" stroke="#2b579a" stroke-width=".9"/></g>
<path d="M1706 1016h9" stroke="#fff" stroke-width="2"/><path d="M1719.4 1016h124.6" stroke="#fff" stroke-width="1" opacity=".85"/><path d="M1781 1012.6v6.8" stroke="#fff" stroke-width="1"/><rect x="1793.4" y="1009.4" width="5.8" height="13.2" fill="#fff"/><path d="M1848.4 1016h11M1853.9 1010.5v11" stroke="#fff" stroke-width="2"/>
<g fill="#fff"><path d="M19.8 1047.6l8.200-1.150v7.850h-8.200z"/><path d="M29.200 1046.300l10.800-1.500v9.500h-10.800z"/><path d="M19.800 1055.500h8.200v7.850l-8.200-1.150z"/><path d="M29.200 1055.500h10.800v9.500l-10.800-1.500z"/></g>
<circle cx="85" cy="1055" r="12.300" fill="none" stroke="#fff" stroke-width="3"/>
<g fill="none" stroke="#a9a9a9" stroke-width="1.6"><rect x="461.2" y="1045.6" width="6.6" height="12" rx="3.3"/><path d="M457.600 1054.500a7 7 0 0 0 13.800 0M464.500 1060.600v3.600M460.500 1064.400h8"/></g>
<g fill="none" stroke="#fff" stroke-width="1.700"><rect x="512.200" y="1046.800" width="15.600" height="16.400"/><path d="M509.800 1049.400h-1.600v11.200h1.600M530.200 1049.400h1.600v11.200h-1.600"/></g>
<g><path d="M570.6 1045.600h9l2.200 2.200h15.400v17.800h-26.600z" fill="#f6d36b"/><path d="M571 1043.200h8.400l1.800 2.400h-10.200z" fill="#e9b53a"/>
<path d="M570.600 1050.200h26.600v15.400h-26.600z" fill="#fbe08a"/><path d="M575.400 1056h17v9.600h-17z" fill="#2f9be0"/><path d="M578.800 1060h10.200v5.600h-10.200z" fill="#fbe08a"/><path d="M575.400 1056h17v2h-17z" fill="#57b6f0"/></g>
<g><circle cx="645.800" cy="1054.700" r="13.600" fill="#e34133"/>
<path d="M645.800 1054.700L634 1047.900A13.600 13.600 0 0 0 639 1066.480Z" fill="#2da94f"/>
<path d="M645.800 1054.700L639 1066.480A13.600 13.600 0 0 0 652.600 1066.480Z" fill="#2da94f"/>
<path d="M645.800 1054.700L652.600 1066.480A13.600 13.600 0 0 0 659.400 1054.700Z" fill="#fcc31e"/>
<path d="M645.800 1054.700L659.400 1054.700A13.600 13.600 0 0 0 657.580 1047.900Z" fill="#fcc31e"/>
<path d="M634 1047.900A13.600 13.600 0 0 1 657.580 1047.900L645.800 1047.900Z" fill="#e34133"/>
<path d="M645.800 1054.700L634.020 1047.900L640.800 1059.600Z" fill="#2da94f"/>
<circle cx="645.800" cy="1054.700" r="6.300" fill="#fff"/><circle cx="645.800" cy="1054.700" r="5" fill="#4a8af4"/></g>
<g><path d="M700.6 1049.4c0-6.200 9-8.400 11.600-2.600M704 1048.800c.6-5.400 8-6.600 9.800-2" fill="none" stroke="#fff" stroke-width="1.300"/><path d="M695 1049.600L721 1046V1068.400L716 1069.800L695 1065.200Z" fill="#fff"/>
<g fill="#0c0c0c"><path d="M697.800 1053l5.600-.8v5.200h-5.600z"/><path d="M704.600 1052l6.600-1v6.400h-6.600z"/><path d="M697.800 1058.600h5.600v5.200l-5.600-1z"/><path d="M704.600 1058.600h6.600v6.600l-6.600-1.200z"/></g></g>
<g><rect x="756.700" y="1040.700" width="26.600" height="26" rx="3.500" fill="#4a4545"/><rect x="761.600" y="1046" width="17" height="6.400" rx="3.200" fill="#d9d6d6"/><rect x="761.600" y="1055.400" width="17" height="6.400" rx="3.200" fill="#8e8a8a"/><circle cx="765" cy="1058.600" r="3.200" fill="#d9d6d6"/></g>
<g><rect x="816.700" y="1040.200" width="30.300" height="29.500" rx="1.500" fill="#b3201c"/><path d="M816.700 1061l30.300-4v11.200a1.500 1.500 0 0 1-1.500 1.500h-27.300a1.500 1.500 0 0 1-1.500-1.500z" fill="#8c1512"/>
<path d="M818.7 1042.4L824.5 1045.6L829.7 1043.0L833.0 1046.3L838.2 1045.6L842.8 1052.8L843.4 1058.0L840.8 1056.0L838.2 1058.0L834.9 1056.0L831.0 1056.7L833.6 1060.6L838.2 1061.2L840.8 1065.2L838.2 1067.1L833.6 1064.5L828.4 1061.2L823.2 1062.6L818.7 1066.5L820.0 1059.9L818.7 1054.7L821.9 1052.1L818.0 1048.2Z" fill="#ece6e6"/><path d="M817.500 1068c5-5 9-8 14-10l1.500 1.500c-5 2-9 5-13 9.500z" fill="#ece6e6"/><circle cx="835.500" cy="1050.500" r="1" fill="#8c1512"/></g>
<g><rect x="880.700" y="1041.400" width="26.400" height="25.400" fill="#1c0404" stroke="#d8241c" stroke-width="1.600"/>
<path d="M886.500 1061.500c3-2 5.500-7 6.600-12.500c.4-2.600-1.600-2.600-1.600-.6c.2 4 3.600 8.600 8.600 10.600c2 .6 2.400-1 .6-1.400c-4.400-.6-10 1-14.200 3.900z" fill="none" stroke="#f4eeee" stroke-width="1.300"/></g>
<g><rect x="955.600" y="1043.600" width="13.400" height="20.400" fill="#fff" stroke="#2b579a" stroke-width="1"/><path d="M958 1047.500h9M958 1050.500h9M958 1053.500h9M958 1056.500h9M958 1059.500h9" stroke="#2b579a" stroke-width="1.300"/>
<path d="M941.700 1043.800L958 1041v26.400l-16.300-2.800z" fill="#2b579a"/><path d="M944.600 1049.200l2.100 10.400l2.400-10.400h1.800l2.400 10.400l2.100-10.400" fill="none" stroke="#fff" stroke-width="2"/></g>
<path d="M1604.600 1058.800l7.400-7.400l7.400 7.400" fill="none" stroke="#fff" stroke-width="1.400"/>
<g fill="none" stroke="#fff" stroke-width="1.300"><rect x="1636.800" y="1050.400" width="14" height="9.600"/><path d="M1651.600 1053v4.400"/><rect x="1638.600" y="1052.200" width="10.400" height="6" fill="#fff" stroke="none"/><path d="M1632 1051.400h4.600M1632 1049v4.800M1634.300 1053.800v2.600"/></g>
<g fill="none" stroke="#fff" stroke-width="1.300"><path d="M1662.400 1052.400h3l4-3.600v13.400l-4-3.600h-3z"/><path d="M1672.800 1052.200l6.400 6.400M1679.200 1052.200l-6.400 6.400"/></g>
<g fill="none" stroke="#fff" stroke-width="1.500"><path d="M1696 1062a14.500 14.500 0 0 1 14.500-14.500" opacity=".55"/><path d="M1699.800 1062a10.700 10.700 0 0 1 10.700-10.700" opacity=".55"/><path d="M1703.600 1062a6.900 6.900 0 0 1 6.900-6.900"/><circle cx="1709" cy="1060.600" r="1.400" fill="#fff" stroke="none"/></g>
<path d="M1868.800 1045.600h20v14.400h-7.600l-2.600 3.400l-2.600-3.400h-7.200z" fill="none" stroke="#fff" stroke-width="1.400"/>
</svg>
<span class="t" style="left:895.05px;top:7.00px;font-size:15px;color:#444;transform:scaleX(1.0112);">Document1 - Word</span>
<span class="t" style="left:1766.27px;top:4.00px;font-size:16.5px;color:#707070;transform:scaleX(0.9793);font-weight:bold;">?</span>
<span class="t" style="left:9.82px;top:37.12px;font-size:16px;color:#fff;transform:scale(0.8156,0.92);">FICHIER</span>
<span class="t" style="left:91.07px;top:37.12px;font-size:16px;color:#2b579a;transform:scale(0.7999,0.92);">ACCUEIL</span>
<span class="t" style="left:175.59px;top:37.12px;font-size:16px;color:#444;transform:scale(0.8484,0.92);">INSERTION</span>
<span class="t" style="left:277.92px;top:37.12px;font-size:16px;color:#444;transform:scale(0.8512,0.92);">CRÉATION</span>
<span class="t" style="left:375.75px;top:37.12px;font-size:16px;color:#444;transform:scale(0.8366,0.92);">MISE EN PAGE</span>
<span class="t" style="left:500.08px;top:37.12px;font-size:16px;color:#444;transform:scale(0.7715,0.92);">RÉFÉRENCES</span>
<span class="t" style="left:613.52px;top:37.12px;font-size:16px;color:#444;transform:scale(0.8148,0.92);">PUBLIPOSTAGE</span>
<span class="t" style="left:742.79px;top:37.12px;font-size:16px;color:#444;transform:scale(0.8424,0.92);">RÉVISION</span>
<span class="t" style="left:836.57px;top:37.12px;font-size:16px;color:#444;transform:scale(0.8201,0.92);">AFFICHAGE</span>
<span class="t" style="left:940.38px;top:37.12px;font-size:16px;color:#444;transform:scale(0.9231,0.92);">EndNote X8</span>
<span class="t" style="left:1774.88px;top:36.00px;font-size:15px;color:#444;transform:scaleX(0.9831);">Denis Corbin</span>
<span class="t" style="left:8.86px;top:110.00px;font-size:15.3px;color:#444;transform:scaleX(0.9647);">Coller</span>
<span class="t" style="left:80.08px;top:69.00px;font-size:15.3px;color:#a2a2a2;transform:scaleX(0.9474);">Couper</span>
<span class="t" style="left:80.06px;top:97.00px;font-size:15.3px;color:#a2a2a2;transform:scaleX(0.9668);">Copier</span>
<span class="t" style="left:79.87px;top:125.00px;font-size:15.3px;color:#444;transform:scaleX(0.9780);">Reproduire la mise en forme</span>
<span class="t" style="left:87.04px;top:155.00px;font-size:12.6px;color:#666;transform:scaleX(1.0186);">Presse-papiers</span>
<span class="t" style="left:288.16px;top:79.00px;font-size:15.3px;color:#222;transform:scaleX(0.9705);">Calibri (Corp</span>
<span class="t" style="left:393.18px;top:79.00px;font-size:15.3px;color:#222;transform:scaleX(0.8000);">11</span>
<span class="t" style="left:481.24px;top:80.00px;font-size:15px;color:#5a5a5a;transform:scaleX(0.9552);font-weight:bold;">A</span>
<span class="t" style="left:505.94px;top:81.00px;font-size:15px;color:#5a5a5a;transform:scaleX(0.9552);font-weight:bold;">A</span>
<span class="t" style="left:539.27px;top:80.00px;font-size:15px;color:#555;transform:scaleX(0.8616);">Aa</span>
<span class="t" style="left:587.92px;top:77.00px;font-size:13.5px;color:#555;transform:scaleX(0.8402);font-weight:bold;">A</span>
<span class="t" style="left:292.53px;top:116.00px;font-size:15px;color:#444;transform:scaleX(0.9481);font-weight:bold;">G</span>
<span class="t" style="left:321.26px;top:115.00px;font-size:16px;color:#444;transform:scaleX(0.9942);font-weight:bold;font-style:italic;font-family:'Liberation Serif',serif;">I</span>
<span class="t" style="left:345.81px;top:116.00px;font-size:15px;color:#444;transform:scaleX(0.8703);font-weight:bold;">S</span>
<span class="t" style="left:379.71px;top:119.00px;font-size:12.5px;color:#555;transform:scaleX(0.9232);">abc</span>
<span class="t" style="left:408.70px;top:115.00px;font-size:15.5px;color:#444;transform:scaleX(0.8841);font-weight:bold;">x</span>
<span class="t" style="left:416.72px;top:125.00px;font-size:8.5px;color:#3b6fb6;transform:scaleX(1.1377);">2</span>
<span class="t" style="left:434.30px;top:115.00px;font-size:15.5px;color:#444;transform:scaleX(0.8841);font-weight:bold;">x</span>
<span class="t" style="left:442.72px;top:115.00px;font-size:8.5px;color:#3b6fb6;transform:scaleX(1.1377);">2</span>
<span class="t" style="left:504.55px;top:114.00px;font-size:10.5px;color:#555;">ab</span>
<span class="t" style="left:546.43px;top:114.00px;font-size:17px;color:#4a4a4a;transform:scaleX(1.1150);font-weight:bold;">A</span>
<span class="t" style="left:418.56px;top:155.00px;font-size:12.6px;color:#666;">Police</span>
<span class="t" style="left:658.88px;top:76.00px;font-size:6.5px;color:#3b6fb6;transform:scaleX(0.7940);font-weight:bold;">1</span>
<span class="t" style="left:659.03px;top:83.00px;font-size:6.5px;color:#3b6fb6;transform:scaleX(0.7652);font-weight:bold;">2</span>
<span class="t" style="left:659.09px;top:90.00px;font-size:6.5px;color:#3b6fb6;transform:scaleX(0.7422);font-weight:bold;">3</span>
<span class="t" style="left:698.28px;top:76.00px;font-size:6.5px;color:#3b6fb6;transform:scaleX(0.7940);font-weight:bold;">1</span>
<span class="t" style="left:702.65px;top:83.00px;font-size:7.5px;color:#3b6fb6;transform:scaleX(0.6510);font-weight:bold;">a</span>
<span class="t" style="left:708.89px;top:90.00px;font-size:7px;color:#3b6fb6;transform:scaleX(0.6234);font-weight:bold;">i</span>
<span class="t" style="left:808.32px;top:76.00px;font-size:11.5px;color:#3b6fb6;transform:scaleX(0.9604);font-weight:bold;">A</span>
<span class="t" style="left:808.65px;top:86.00px;font-size:11.5px;color:#8c4aa8;transform:scaleX(1.0073);font-weight:bold;">Z</span>
<span class="t" style="left:695.83px;top:155.00px;font-size:12.6px;color:#666;transform:scaleX(1.0302);">Paragraphe</span>
<span class="t" style="left:882.31px;top:85.00px;font-size:15.6px;color:#000;transform:scaleX(0.9648);">AaBbCcDd</span>
<span class="t" style="left:887.90px;top:115.00px;font-size:15.3px;color:#666;transform:scaleX(0.9879);">¶ Normal</span>
<span class="t" style="left:972.56px;top:85.00px;font-size:15.6px;color:#000;transform:scaleX(0.9629);">AaBbCcDd</span>
<span class="t" style="left:972.05px;top:115.00px;font-size:15.3px;color:#666;transform:scaleX(0.9054);">¶ Sans int...</span>
<span class="t" style="left:1062.14px;top:81.00px;font-size:23px;color:#3f80c0;transform:scaleX(0.9765);">AaBbCc</span>
<div class="a" style="left:1136px;top:72px;width:10px;height:34px;background:#fff;"></div>
<span class="t" style="left:1078.88px;top:115.00px;font-size:15.3px;color:#666;transform:scaleX(0.9426);">Titre 1</span>
<span class="t" style="left:1152.35px;top:84.00px;font-size:19px;color:#3f80c0;transform:scaleX(0.9641);">AaBbCcD</span>
<div class="a" style="left:1226.6px;top:80px;width:8px;height:24px;background:#fff;"></div>
<span class="t" style="left:1168.57px;top:115.00px;font-size:15.3px;color:#666;transform:scaleX(0.9603);">Titre 2</span>
<span class="t" style="left:1242.31px;top:67.00px;font-size:38px;color:#2a2a2a;transform:scaleX(0.9752);">AaB</span>
<div class="a" style="left:1240px;top:67px;width:80px;height:9px;background:#fff;"></div>
<span class="t" style="left:1264.26px;top:115.00px;font-size:15.3px;color:#666;transform:scaleX(0.9851);">Titre</span>
<span class="t" style="left:1331.96px;top:86.00px;font-size:14.6px;color:#5a5a5a;transform:scaleX(1.1379);">AaBbCcD</span>
<span class="t" style="left:1337.33px;top:115.00px;font-size:15.3px;color:#666;transform:scaleX(0.9734);">Sous-titre</span>
<span class="t" style="left:1423.02px;top:85.00px;font-size:15.6px;color:#404040;transform:scaleX(0.9202);font-style:italic;">AaBbCcDd</span>
<span class="t" style="left:1422.42px;top:115.00px;font-size:15.3px;color:#666;transform:scaleX(0.9339);">Emphase...</span>
<span class="t" style="left:1513.32px;top:85.00px;font-size:15.6px;color:#000;transform:scaleX(0.9202);font-style:italic;">AaBbCcDd</span>
<span class="t" style="left:1510.56px;top:115.00px;font-size:15.3px;color:#666;transform:scaleX(0.9475);">Accentuat...</span>
<span class="t" style="left:1603.32px;top:85.00px;font-size:15.6px;color:#5b9bd5;transform:scaleX(0.9240);font-style:italic;">AaBbCcDd</span>
<span class="t" style="left:1598.92px;top:115.00px;font-size:15.3px;color:#666;transform:scaleX(0.9382);">Emphase i...</span>
<span class="t" style="left:1265.55px;top:155.00px;font-size:12.6px;color:#666;transform:scaleX(0.9777);">Style</span>
<span class="t" style="left:1740.64px;top:68.00px;font-size:15.3px;color:#444;transform:scaleX(0.9192);">Rechercher</span>
<span class="t" style="left:1719.10px;top:93.00px;font-size:11px;color:#777;transform:scaleX(0.9132);font-weight:bold;">ab</span>
<span class="t" style="left:1725.28px;top:102.00px;font-size:11px;color:#50709c;transform:scaleX(0.9847);font-weight:bold;">ac</span>
<span class="t" style="left:1740.60px;top:95.00px;font-size:15.3px;color:#444;transform:scaleX(0.9506);">Remplacer</span>
<span class="t" style="left:1741.14px;top:122.00px;font-size:15.3px;color:#444;transform:scaleX(0.9531);">Sélectionner</span>
<span class="t" style="left:1740.67px;top:155.00px;font-size:12.6px;color:#666;transform:scaleX(1.0903);">Modification</span>
<span class="t" style="left:411.81px;top:441.00px;font-size:29.5px;color:#0a0a0a;filter:blur(.45px);">1</span>
<span class="t" style="left:289.16px;top:513.00px;font-size:29.5px;color:#0a0a0a;filter:blur(.45px);">2</span>
<span class="t" style="left:291.09px;top:662.00px;font-size:29.5px;color:#0a0a0a;filter:blur(.45px);">3</span>
<span class="t" style="left:414.19px;top:731.00px;font-size:29.5px;color:#0a0a0a;filter:blur(.45px);">4</span>
<span class="t" style="left:535.11px;top:662.00px;font-size:29.5px;color:#0a0a0a;filter:blur(.45px);">5</span>
<span class="t" style="left:540.45px;top:514.00px;font-size:29.5px;color:#0a0a0a;filter:blur(.45px);">6</span>
<span class="t" style="left:412.91px;top:483.00px;font-size:29.5px;color:#0a0a0a;filter:blur(.45px);">7</span>
<span class="t" style="left:323.06px;top:536.00px;font-size:29.5px;color:#0a0a0a;filter:blur(.45px);">8</span>
<span class="t" style="left:326.98px;top:639.00px;font-size:29.5px;color:#0a0a0a;filter:blur(.45px);">9</span>
<span class="t" style="left:404.37px;top:688.00px;font-size:29.5px;color:#0a0a0a;filter:blur(.45px);">10</span>
<span class="t" style="left:494.29px;top:638.00px;font-size:29.5px;color:#0a0a0a;filter:blur(.45px);">11</span>
<span class="t" style="left:492.86px;top:529.00px;font-size:29.5px;color:#0a0a0a;filter:blur(.45px);">12</span>
<span class="t" style="left:402.75px;top:527.00px;font-size:29.5px;color:#0a0a0a;filter:blur(.45px);">13</span>
<span class="t" style="left:342.13px;top:585.00px;font-size:29.5px;color:#0a0a0a;filter:blur(.45px);">14</span>
<span class="t" style="left:405.11px;top:647.00px;font-size:29.5px;color:#0a0a0a;filter:blur(.45px);">15</span>
<span class="t" style="left:464.75px;top:585.00px;font-size:29.5px;color:#0a0a0a;filter:blur(.45px);">16</span>
<span class="t" style="left:403.26px;top:585.00px;font-size:29.5px;color:#0a0a0a;filter:blur(.45px);">17</span>
<span class="t" style="left:829.81px;top:441.00px;font-size:29.5px;color:#0a0a0a;filter:blur(.45px);">1</span>
<span class="t" style="left:707.16px;top:513.00px;font-size:29.5px;color:#0a0a0a;filter:blur(.45px);">2</span>
<span class="t" style="left:709.09px;top:662.00px;font-size:29.5px;color:#0a0a0a;filter:blur(.45px);">3</span>
<span class="t" style="left:832.19px;top:731.00px;font-size:29.5px;color:#0a0a0a;filter:blur(.45px);">4</span>
<span class="t" style="left:953.11px;top:662.00px;font-size:29.5px;color:#0a0a0a;filter:blur(.45px);">5</span>
<span class="t" style="left:958.45px;top:514.00px;font-size:29.5px;color:#0a0a0a;filter:blur(.45px);">6</span>
<span class="t" style="left:830.91px;top:483.00px;font-size:29.5px;color:#0a0a0a;filter:blur(.45px);">7</span>
<span class="t" style="left:741.06px;top:536.00px;font-size:29.5px;color:#0a0a0a;filter:blur(.45px);">8</span>
<span class="t" style="left:744.98px;top:639.00px;font-size:29.5px;color:#0a0a0a;filter:blur(.45px);">9</span>
<span class="t" style="left:822.37px;top:688.00px;font-size:29.5px;color:#0a0a0a;filter:blur(.45px);">10</span>
<span class="t" style="left:912.29px;top:638.00px;font-size:29.5px;color:#0a0a0a;filter:blur(.45px);">11</span>
<span class="t" style="left:910.86px;top:529.00px;font-size:29.5px;color:#0a0a0a;filter:blur(.45px);">12</span>
<span class="t" style="left:820.75px;top:527.00px;font-size:29.5px;color:#0a0a0a;filter:blur(.45px);">13</span>
<span class="t" style="left:760.13px;top:585.00px;font-size:29.5px;color:#0a0a0a;filter:blur(.45px);">14</span>
<span class="t" style="left:823.11px;top:647.00px;font-size:29.5px;color:#0a0a0a;filter:blur(.45px);">15</span>
<span class="t" style="left:882.75px;top:585.00px;font-size:29.5px;color:#0a0a0a;filter:blur(.45px);">16</span>
<span class="t" style="left:821.26px;top:585.00px;font-size:29.5px;color:#0a0a0a;filter:blur(.45px);">17</span>
<span class="t" style="left:1248.01px;top:441.00px;font-size:29.5px;color:#0a0a0a;filter:blur(.45px);">1</span>
<span class="t" style="left:1125.36px;top:513.00px;font-size:29.5px;color:#0a0a0a;filter:blur(.45px);">2</span>
<span class="t" style="left:1127.29px;top:662.00px;font-size:29.5px;color:#0a0a0a;filter:blur(.45px);">3</span>
<span class="t" style="left:1250.39px;top:731.00px;font-size:29.5px;color:#0a0a0a;filter:blur(.45px);">4</span>
<span class="t" style="left:1371.31px;top:662.00px;font-size:29.5px;color:#0a0a0a;filter:blur(.45px);">5</span>
<span class="t" style="left:1376.65px;top:514.00px;font-size:29.5px;color:#0a0a0a;filter:blur(.45px);">6</span>
<span class="t" style="left:1249.11px;top:483.00px;font-size:29.5px;color:#0a0a0a;filter:blur(.45px);">7</span>
<span class="t" style="left:1159.26px;top:536.00px;font-size:29.5px;color:#0a0a0a;filter:blur(.45px);">8</span>
<span class="t" style="left:1163.18px;top:639.00px;font-size:29.5px;color:#0a0a0a;filter:blur(.45px);">9</span>
<span class="t" style="left:1240.57px;top:688.00px;font-size:29.5px;color:#0a0a0a;filter:blur(.45px);">10</span>
<span class="t" style="left:1330.49px;top:638.00px;font-size:29.5px;color:#0a0a0a;filter:blur(.45px);">11</span>
<span class="t" style="left:1329.06px;top:529.00px;font-size:29.5px;color:#0a0a0a;filter:blur(.45px);">12</span>
<span class="t" style="left:1238.95px;top:527.00px;font-size:29.5px;color:#0a0a0a;filter:blur(.45px);">13</span>
<span class="t" style="left:1178.33px;top:585.00px;font-size:29.5px;color:#0a0a0a;filter:blur(.45px);">14</span>
<span class="t" style="left:1241.31px;top:647.00px;font-size:29.5px;color:#0a0a0a;filter:blur(.45px);">15</span>
<span class="t" style="left:1300.95px;top:585.00px;font-size:29.5px;color:#0a0a0a;filter:blur(.45px);">16</span>
<span class="t" style="left:1239.46px;top:585.00px;font-size:29.5px;color:#0a0a0a;filter:blur(.45px);">17</span>
<span class="t" style="left:401.46px;top:795.00px;font-size:21.5px;color:#2a2a2a;transform:scaleX(0.8346);font-weight:bold;filter:blur(.55px);">SR</span>
<span class="t" style="left:824.27px;top:795.00px;font-size:21.5px;color:#2a2a2a;transform:scaleX(0.9131);font-weight:bold;filter:blur(.55px);">HR</span>
<span class="t" style="left:1223.91px;top:795.00px;font-size:21.5px;color:#2a2a2a;transform:scaleX(0.9596);font-weight:bold;filter:blur(.55px);">HRdex</span>
<span class="t" style="left:1567.83px;top:339.00px;font-size:51.5px;color:#1a1a1a;transform:scaleX(1.0052);filter:blur(.45px);">0.2</span>
<span class="t" style="left:1567.85px;top:480.00px;font-size:51.5px;color:#1a1a1a;transform:scaleX(0.9943);filter:blur(.45px);">0.15</span>
<span class="t" style="left:1568.01px;top:619.00px;font-size:51.5px;color:#1a1a1a;transform:scaleX(0.9168);filter:blur(.45px);">0.1</span>
<span class="t" style="left:1567.85px;top:760.00px;font-size:51.5px;color:#1a1a1a;transform:scaleX(0.9943);filter:blur(.45px);">0.05</span>
<span class="t" style="left:6.94px;top:1010.00px;font-size:12.8px;color:#fff;transform:scaleX(0.9132);">PAGE 1 SUR 1</span>
<span class="t" style="left:107.41px;top:1010.00px;font-size:12.8px;color:#fff;transform:scaleX(0.9666);">51 MOTS</span>
<span class="t" style="left:214.82px;top:1010.00px;font-size:12.8px;color:#fff;transform:scaleX(0.9305);">FRANÇAIS (CANADA)</span>
<span class="t" style="left:1875.99px;top:1010.00px;font-size:12.8px;color:#fff;transform:scaleX(0.9594);">200 %</span>
<span class="t" style="left:106.01px;top:1046.00px;font-size:18px;color:#a9a9a9;transform:scaleX(0.9571);">Taper ici pour rechercher</span>
<span class="t" style="left:1725.54px;top:1047.00px;font-size:15.4px;color:#fff;transform:scaleX(0.8308);">FRA</span>
<span class="t" style="left:1790.29px;top:1035.00px;font-size:15.4px;color:#fff;transform:scaleX(0.8767);">15:47</span>
<span class="t" style="left:1769.86px;top:1058.00px;font-size:15.4px;color:#fff;transform:scaleX(0.9551);">2017-08-21</span>
</body></html>
